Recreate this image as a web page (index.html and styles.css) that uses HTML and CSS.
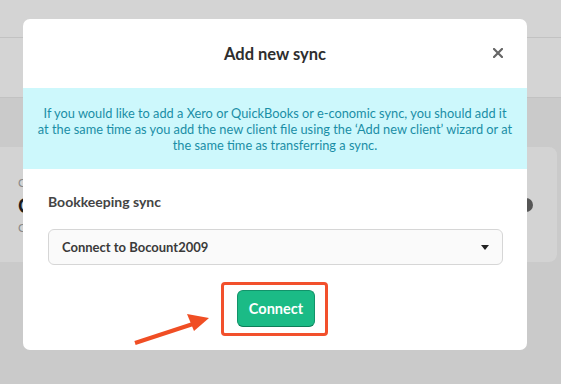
FILE: index.html
```
<!DOCTYPE html>
<html lang="en">
<head>
    <meta charset="UTF-8">
    <meta name="viewport" content="width=device-width, initial-scale=1.0">
    <title>Add new sync</title>
    <link rel="stylesheet" href="styles.css">
</head>
<body>
    <div class="page">
        <div class="topbar"></div>
        <div class="subbar"></div>
        <div class="card">
            <div class="card-info">
                <span class="card-label">C</span>
                <span class="card-title">C</span>
                <span class="card-label">C</span>
            </div>
            <span class="card-dot"></span>
        </div>
    </div>

    <div class="modal">
        <div class="modal-header">
            <h2>Add new sync</h2>
            <button class="close" aria-label="Close">
                <svg width="10" height="10" viewBox="0 0 10 10">
                    <path d="M1 1 L9 9 M9 1 L1 9" stroke="#666" stroke-width="2.2" stroke-linecap="square"/>
                </svg>
            </button>
        </div>
        <div class="notice">
            <p>If you would like to add a Xero or QuickBooks or e-conomic sync, you should add it<br>at the same time as you add the new client file using the ‘Add new client’ wizard or at<br>the same time as transferring a sync.</p>
        </div>
        <div class="modal-body">
            <label class="field-label">Bookkeeping sync</label>
            <div class="select">
                <span>Connect to Bocount2009</span>
                <span class="caret"></span>
            </div>
            <div class="actions">
                <div class="highlight">
                    <button class="btn-connect">Connect</button>
                    <span class="highlight-box"></span>
                </div>
            </div>
        </div>
    </div>

    <svg class="arrow" width="561" height="384" viewBox="0 0 561 384">
        <line x1="135" y1="343" x2="196" y2="323" stroke="#f04e24" stroke-width="4"/>
        <polygon points="209,318 187,314 194,331" fill="#f04e24"/>
    </svg>
</body>
</html>
```

FILE: styles.css
```
body {
    margin: 0;
    font-family: 'Lato', 'Open Sans', sans-serif;
    background: #cacaca;
    width: 561px;
    height: 384px;
    overflow: hidden;
    position: relative;
}

.topbar {
    height: 37px;
    background: #d4d4d4;
    border-bottom: 1px solid #c2c2c2;
}

.subbar {
    height: 59px;
    background: #d4d4d4;
    border-bottom: 1px solid #c2c2c2;
}

.card {
    margin: 49px 4px 0 0;
    height: 115px;
    background: #d3d3d3;
    border-radius: 0 8px 8px 0;
    display: flex;
    align-items: center;
    justify-content: space-between;
}

.card-info {
    display: flex;
    flex-direction: column;
    padding-left: 18px;
    gap: 3px;
}

.card-label {
    font-size: 12px;
    color: #8a8a8a;
}

.card-title {
    font-size: 20px;
    font-weight: bold;
    color: #1c1c1c;
}

.card-dot {
    width: 14px;
    height: 14px;
    border-radius: 50%;
    background: #565656;
    margin-right: 24px;
}

.modal {
    position: absolute;
    left: 23px;
    top: 19px;
    width: 504px;
    height: 331px;
    background: white;
    border-radius: 7px;
    overflow: hidden;
    display: flex;
    flex-direction: column;
}

.modal-header {
    height: 69px;
    display: flex;
    align-items: center;
    justify-content: center;
    position: relative;
}

.modal-header h2 {
    margin: 0;
    font-size: 16.5px;
    font-weight: bold;
    color: #2e2e2e;
}

.close {
    position: absolute;
    right: 24px;
    top: 29px;
    border: none;
    background: none;
    padding: 0;
    width: 10px;
    height: 10px;
    display: flex;
}

.notice {
    height: 81px;
    background: #cdf8fc;
    color: #1a8ea6;
    display: flex;
    align-items: center;
    justify-content: center;
}

.notice p {
    margin: 0;
    font-size: 12.8px;
    line-height: 16px;
    text-align: center;
    white-space: nowrap;
}

.modal-body {
    padding: 24px 24px 0;
    display: flex;
    flex-direction: column;
}

.field-label {
    font-size: 14px;
    font-weight: bold;
    color: #444;
    line-height: 17px;
    height: 17px;
    padding-left: 1px;
}

.select {
    margin-top: 19px;
    height: 36px;
    box-sizing: border-box;
    border: 1px solid #d6d6d6;
    border-radius: 6px;
    background: #fafafa;
    display: flex;
    align-items: center;
    justify-content: space-between;
    padding: 0 13px 0 13px;
    margin-left: 1px;
    font-size: 13px;
    font-weight: bold;
    color: #3a3a3a;
}

.caret {
    width: 0;
    height: 0;
    border-left: 4px solid transparent;
    border-right: 4px solid transparent;
    border-top: 5px solid #222;
}

.actions {
    margin-top: 25px;
    display: flex;
    justify-content: center;
}

.highlight {
    position: relative;
    margin-left: 2px;
}

.btn-connect {
    display: block;
    width: 78px;
    height: 37px;
    border: 1px solid #12936a;
    border-bottom-color: #0d7e59;
    border-radius: 6px;
    background: #1bbb86;
    color: white;
    font-family: 'Lato', sans-serif;
    font-size: 14.5px;
    font-weight: bold;
    padding: 0;
}

.highlight-box {
    position: absolute;
    left: -16px;
    top: -8px;
    right: -13px;
    bottom: -9px;
    border: 3px solid #f2502c;
    border-radius: 4px;
}

.arrow {
    position: absolute;
    left: 0;
    top: 0;
}
```
